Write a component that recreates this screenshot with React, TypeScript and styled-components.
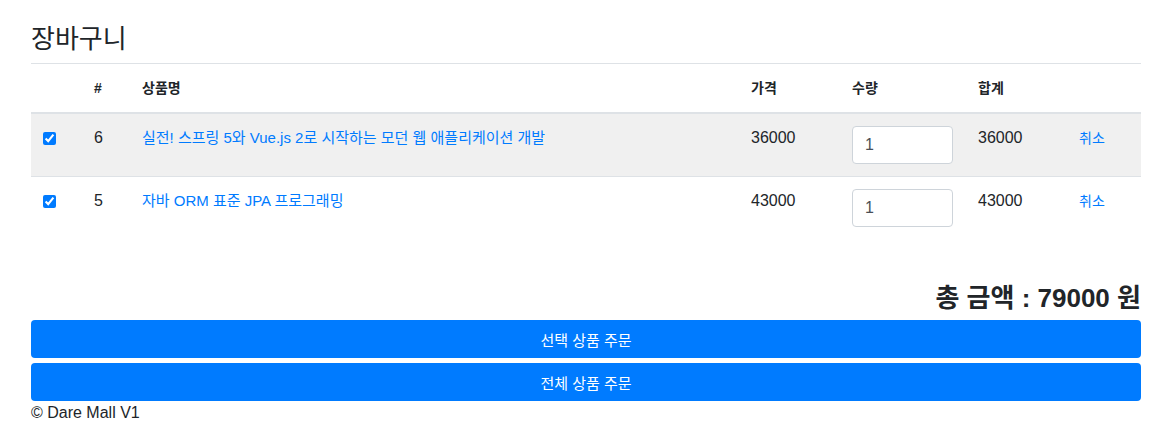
import styled, { createGlobalStyle } from 'styled-components';

const GlobalStyle = createGlobalStyle`
	body {
		margin: 0;
		font-family: 'Liberation Sans', 'Noto Sans CJK KR', sans-serif;
		font-size: 16px;
		line-height: 1.5;
		color: #212529;
		background: #fff;
	}
`;

const colors = {
	text: '#212529',
	primary: '#007bff',
	border: '#dee2e6',
	stripe: '#f0f0f0',
};

const Page = styled.div`
	padding: 0 26px 0 31px;
`;

const Title = styled.h3`
	margin: 0;
	padding-top: 24px;
	font-size: 26px;
	font-weight: 400;
	line-height: 1.2;
	padding-bottom: 8px;
	border-bottom: 1px solid ${colors.border};
`;

const Table = styled.table`
	width: 100%;
	table-layout: fixed;
	border-collapse: collapse;
	margin-bottom: 44px;
`;

// widths are outer widths; cells add 12px padding on each side
const Th = styled.th<{ w?: number }>`
	width: ${({ w }) => (w ? `${w - 24}px` : 'auto')};
	padding: 12px;
	text-align: left;
	font-size: 14px;
	font-weight: 700;
	line-height: 24px;
	border-bottom: 2px solid ${colors.border};
`;

const Row = styled.tr<{ striped?: boolean }>`
	background: ${({ striped }) => (striped ? colors.stripe : 'transparent')};
`;

const Td = styled.td`
	padding: 12px;
	vertical-align: top;
	font-size: 16px;
	line-height: 24px;
	border-top: 1px solid ${colors.border};
`;

const Check = styled.input`
	width: 13px;
	height: 13px;
	margin: 6px 0 0;
	accent-color: ${colors.primary};
`;

const Link = styled.a<{ size?: number }>`
	color: ${colors.primary};
	text-decoration: none;
	font-size: ${({ size }) => size ?? 15}px;
`;

const Qty = styled.input`
	box-sizing: border-box;
	width: 101px;
	height: 38px;
	padding: 6px 12px;
	border: 1px solid #ced4da;
	border-radius: 4px;
	font: inherit;
	font-size: 16px;
	color: #495057;
	background: #fff;
`;

const Total = styled.h4`
	margin: 0 0 6px;
	text-align: right;
	font-size: 26px;
	font-weight: 700;
	line-height: 1.2;
`;

const Buttons = styled.div`
	display: flex;
	flex-direction: column;
	gap: 5px;
`;

const Button = styled.button`
	height: 38px;
	border: none;
	border-radius: 4px;
	background: ${colors.primary};
	color: #fff;
	font-family: inherit;
	font-size: 15px;
	cursor: pointer;
`;

const Footer = styled.footer`
	font-size: 16px;
	line-height: 24px;
`;

const items = [
	{ id: 6, name: '실전! 스프링 5와 Vue.js 2로 시작하는 모던 웹 애플리케이션 개발', price: 36000, qty: 1 },
	{ id: 5, name: '자바 ORM 표준 JPA 프로그래밍', price: 43000, qty: 1 },
];

const App = () => {
	const total = items.reduce((sum, i) => sum + i.price * i.qty, 0);
	return (
		<Page>
			<GlobalStyle />
			<Title>장바구니</Title>
			<Table>
				<thead>
					<tr>
						<Th w={51}></Th>
						<Th w={48}>#</Th>
						<Th>상품명</Th>
						<Th w={101}>가격</Th>
						<Th w={126}>수량</Th>
						<Th w={101}>합계</Th>
						<Th w={74}></Th>
					</tr>
				</thead>
				<tbody>
					{items.map((item, idx) => (
						<Row key={item.id} striped={idx % 2 === 0}>
							<Td>
								<Check type='checkbox' defaultChecked />
							</Td>
							<Td>{item.id}</Td>
							<Td>
								<Link href='#'>{item.name}</Link>
							</Td>
							<Td>{item.price}</Td>
							<Td>
								<Qty type='text' defaultValue={item.qty} />
							</Td>
							<Td>{item.price * item.qty}</Td>
							<Td>
								<Link href='#' size={14}>취소</Link>
							</Td>
						</Row>
					))}
				</tbody>
			</Table>
			<Total>총 금액 : {total} 원</Total>
			<Buttons>
				<Button>선택 상품 주문</Button>
				<Button>전체 상품 주문</Button>
			</Buttons>
			<Footer>© Dare Mall V1</Footer>
		</Page>
	);
};

export default App;
